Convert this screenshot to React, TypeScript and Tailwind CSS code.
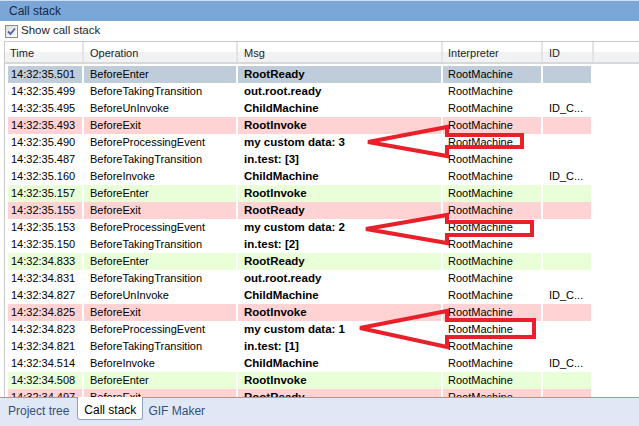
import React from 'react';

type Kind = 'sel' | 'exit' | 'enter' | 'none';

interface Row {
  time: string;
  op: string;
  msg: string;
  id: string;
  kind: Kind;
}

const rows: Row[] = [
  { time: '14:32:35.501', op: 'BeforeEnter', msg: 'RootReady', id: '', kind: 'sel' },
  { time: '14:32:35.499', op: 'BeforeTakingTransition', msg: 'out.root.ready', id: '', kind: 'none' },
  { time: '14:32:35.495', op: 'BeforeUnInvoke', msg: 'ChildMachine', id: 'ID_C...', kind: 'none' },
  { time: '14:32:35.493', op: 'BeforeExit', msg: 'RootInvoke', id: '', kind: 'exit' },
  { time: '14:32:35.490', op: 'BeforeProcessingEvent', msg: 'my custom data: 3', id: '', kind: 'none' },
  { time: '14:32:35.487', op: 'BeforeTakingTransition', msg: 'in.test: [3]', id: '', kind: 'none' },
  { time: '14:32:35.160', op: 'BeforeInvoke', msg: 'ChildMachine', id: 'ID_C...', kind: 'none' },
  { time: '14:32:35.157', op: 'BeforeEnter', msg: 'RootInvoke', id: '', kind: 'enter' },
  { time: '14:32:35.155', op: 'BeforeExit', msg: 'RootReady', id: '', kind: 'exit' },
  { time: '14:32:35.153', op: 'BeforeProcessingEvent', msg: 'my custom data: 2', id: '', kind: 'none' },
  { time: '14:32:35.150', op: 'BeforeTakingTransition', msg: 'in.test: [2]', id: '', kind: 'none' },
  { time: '14:32:34.833', op: 'BeforeEnter', msg: 'RootReady', id: '', kind: 'enter' },
  { time: '14:32:34.831', op: 'BeforeTakingTransition', msg: 'out.root.ready', id: '', kind: 'none' },
  { time: '14:32:34.827', op: 'BeforeUnInvoke', msg: 'ChildMachine', id: 'ID_C...', kind: 'none' },
  { time: '14:32:34.825', op: 'BeforeExit', msg: 'RootInvoke', id: '', kind: 'exit' },
  { time: '14:32:34.823', op: 'BeforeProcessingEvent', msg: 'my custom data: 1', id: '', kind: 'none' },
  { time: '14:32:34.821', op: 'BeforeTakingTransition', msg: 'in.test: [1]', id: '', kind: 'none' },
  { time: '14:32:34.514', op: 'BeforeInvoke', msg: 'ChildMachine', id: 'ID_C...', kind: 'none' },
  { time: '14:32:34.508', op: 'BeforeEnter', msg: 'RootInvoke', id: '', kind: 'enter' },
  { time: '14:32:34.497', op: 'BeforeExit', msg: 'RootReady', id: '', kind: 'exit' },
];

const cellBg: Record<Kind, string> = {
  sel: 'bg-[#bfcddb]',
  exit: 'bg-[#ffd3d3]',
  enter: 'bg-[#e8ffd8]',
  none: '',
};

// arrows drawn over the grid: tip, back edge x, box top/bottom, box right, wing ends
const arrows = [
  { tx: 368, ty: 142, top: 127, bt: 135, bb: 147, right: 522, bottom: 156 },
  { tx: 366, ty: 229, top: 215, bt: 222, bb: 235, right: 532, bottom: 243 },
  { tx: 360, ty: 328, top: 311, bt: 320, bb: 337, right: 534, bottom: 347 },
];

const Header: React.FC<{ w: string; label: string; pl: string }> = ({ w, label, pl }) => (
  <div className={`${w} ${pl} h-full flex items-center pt-[3px] border-r-2 border-[#e4e4e4] shrink-0`}>
    {label}
  </div>
);

export default function App() {
  return (
    <div
      className="relative w-[639px] h-[426px] overflow-hidden bg-white text-[11px] text-black"
      style={{ fontFamily: '"Liberation Sans", Arial, sans-serif' }}
    >
      {/* title bar */}
      <div className="h-[21px] bg-[#7ba7d8] border-t border-[#cddcef] flex items-center pl-[9px] text-[12px] text-[#15283f]">
        Call stack
      </div>

      {/* checkbox */}
      <div className="h-[20px] flex items-center pl-[5px] gap-[3px]">
        <div className="w-[13px] h-[13px] border border-[#8e8f8f] bg-gradient-to-br from-[#dcdcdc] to-[#fbfbfb] flex items-center justify-center">
          <svg width="9" height="9" viewBox="0 0 9 9">
            <path d="M1 4.5 L3.5 7 L8 1.5" stroke="#4b62a0" strokeWidth="1.8" fill="none" />
          </svg>
        </div>
        <span className="text-[11.5px] text-[#1e1e1e]">Show call stack</span>
      </div>

      {/* grid */}
      <div className="ml-[4px] h-[356px] border-l border-t border-[#c9c9c9] overflow-hidden">
        <div className="h-[22px] flex bg-gradient-to-b from-white from-50% to-[#f1f2f4] to-50% border-b-2 border-[#d8d8d8] text-[#1e1e1e]">
          <Header w="w-[79px]" pl="pl-[5px]" label="Time" />
          <Header w="w-[154px]" pl="pl-[6px]" label="Operation" />
          <Header w="w-[205px]" pl="pl-[6px]" label="Msg" />
          <Header w="w-[100px]" pl="pl-[5px]" label="Interpreter" />
          <Header w="w-[51px]" pl="pl-[6px]" label="ID" />
        </div>
        <div className="pt-[2px] pl-[3px]">
          {rows.map((r, i) => {
            const bg = cellBg[r.kind];
            return (
              <div key={i} className="h-[17px] flex gap-[2px] leading-[17px] whitespace-nowrap">
                <div className={`w-[74px] pl-[3px] ${bg}`}>{r.time}</div>
                <div className={`w-[152px] pl-[6px] ${bg}`}>{r.op}</div>
                <div className={`w-[203px] pl-[6px] font-bold text-[11.5px] ${bg}`}>{r.msg}</div>
                <div className={`w-[98px] pl-[5px] ${bg}`}>RootMachine</div>
                <div className={`w-[48px] pl-[6px] ${bg}`}>{r.id}</div>
              </div>
            );
          })}
        </div>
      </div>

      {/* tab strip */}
      <div className="h-[29px] border-t border-[#7fa2cf] bg-[#dfe8f4] flex items-start text-[12px]">
        <div className="pl-[8px] pr-[8px] pt-[4px] text-[#34507a]">Project tree</div>
        <div className="-mt-px h-[23px] px-[6px] pt-[4px] bg-white border border-t-0 border-[#8ea3c1] rounded-b-[3px] text-black">
          Call stack
        </div>
        <div className="pl-[5px] pt-[4px] text-[#34507a]">GIF Maker</div>
      </div>

      {/* red annotation arrows */}
      <svg className="absolute inset-0 pointer-events-none" width="639" height="426">
        {arrows.map((a, i) => (
          <polygon
            key={i}
            points={`${a.tx},${a.ty} 447,${a.top} 447,${a.bt} ${a.right},${a.bt} ${a.right},${a.bb} 447,${a.bb} 447,${a.bottom}`}
            fill="none"
            stroke="#e8202a"
            strokeWidth="4"
            strokeLinejoin="miter"
          />
        ))}
      </svg>
    </div>
  );
}
